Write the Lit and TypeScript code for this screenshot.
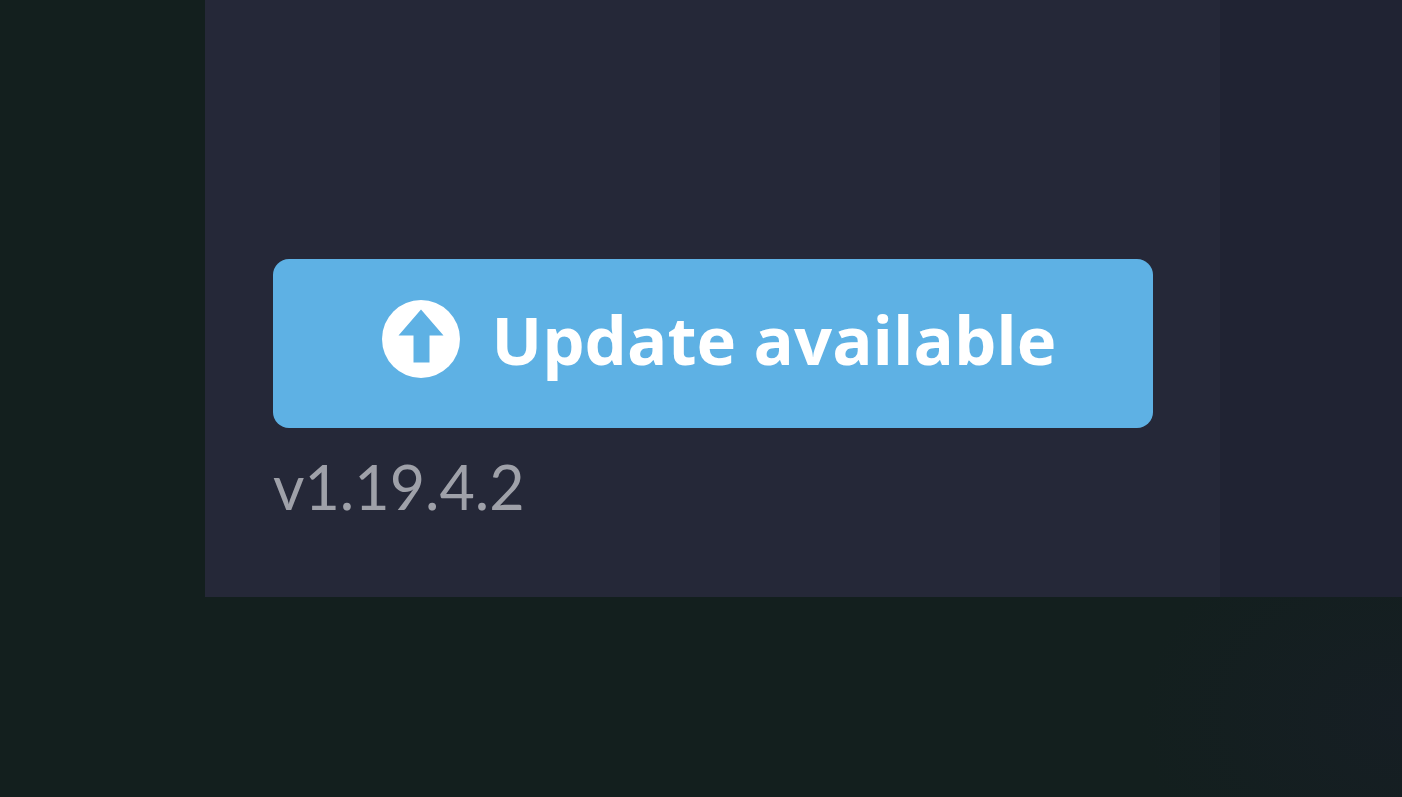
import { LitElement, html, css } from "lit";
import { customElement } from "lit/decorators.js";

@customElement("app-root")
export class AppRoot extends LitElement {
  static styles = css`
    :host {
      display: flex;
      min-height: 100vh;
      box-sizing: border-box;
      background: radial-gradient(ellipse 260px 200px at 100% 90%, #161e24, #131f1e00), #131f1e;
      padding: 0 0 200px 205px;
    }
    .window {
      flex: 1;
      display: flex;
      background: #202333;
    }
    .sidebar {
      flex: 0 1 1015px;
      box-sizing: border-box;
      display: flex;
      flex-direction: column;
      justify-content: flex-end;
      padding: 0 67px 74px 68px;
      background: #252838;
    }
    .update {
      display: flex;
      align-items: center;
      justify-content: center;
      gap: 32px;
      width: 100%;
      padding: 40px 20px 49px 32px;
      border: 0;
      border-radius: 16px;
      background: #5eb1e4;
      color: #fff;
      font: 700 67px/80px "Open Sans", sans-serif;
      white-space: nowrap;
      cursor: pointer;
    }
    .icon {
      width: 78px;
      height: 78px;
      flex: none;
    }
    .version {
      margin: 22px 0 0;
      color: #9fa1a9;
      font-size: 61px;
      line-height: 73px;
      font-family: "Lato", sans-serif;
    }
  `;

  render() {
    return html`
      <main class="window">
        <aside class="sidebar">
          <button class="update" type="button">
            <svg class="icon" viewBox="0 0 78 78" aria-hidden="true">
              <circle cx="39" cy="39" r="39" fill="#fff" />
              <path d="M39 9.500 61.500 35.500H47.500V62.500H31.500V35.500H16.500Z" fill="#5eb1e4" />
            </svg>
            <span>Update available</span>
          </button>
          <p class="version">v1.19.4.2</p>
        </aside>
      </main>
    `;
  }
}
